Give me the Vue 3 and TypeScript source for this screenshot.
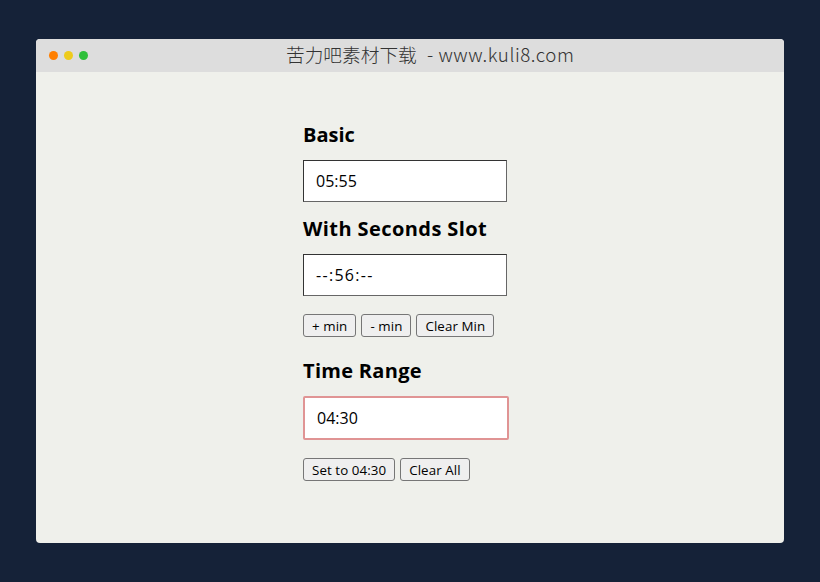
<template>
  <div class="page">
    <div class="window">
      <div class="titlebar">
        <div class="dots">
          <span class="dot orange"></span>
          <span class="dot yellow"></span>
          <span class="dot green"></span>
        </div>
        <div class="title"><span class="cn">苦力吧素材下载</span> <span class="site">- www.kuli8.com</span></div>
      </div>
      <div class="content">
        <div class="column">
          <h3 class="first">Basic</h3>
          <input class="time" type="text" :value="basic" readonly />
          <h3 class="second">With Seconds Slot</h3>
          <input class="time dashed" type="text" :value="seconds" readonly />
          <div class="buttons">
            <button v-for="b in minButtons" :key="b" type="button">{{ b }}</button>
          </div>
          <h3 class="third">Time Range</h3>
          <input class="time error" type="text" :value="range" readonly />
          <div class="buttons">
            <button v-for="b in rangeButtons" :key="b" type="button">{{ b }}</button>
          </div>
        </div>
      </div>
    </div>
  </div>
</template>

<script setup lang="ts">
const basic = '05:55'
const seconds = '--:56:--'
const range = '04:30'
const minButtons: string[] = ['+ min', '- min', 'Clear Min']
const rangeButtons: string[] = ['Set to 04:30', 'Clear All']
</script>

<style>
html,
body {
  margin: 0;
  background: #152238;
}
</style>

<style scoped>
.page {
  width: 820px;
  height: 582px;
  padding: 39px 36px;
  box-sizing: border-box;
  background: #152238;
  font-family: "Open Sans", "Noto Sans", sans-serif;
}

.window {
  height: 504px;
  border-radius: 4px;
  overflow: hidden;
  background: #eff0eb;
}

.titlebar {
  height: 33px;
  display: flex;
  align-items: center;
  position: relative;
  background: #dddddd;
}

.dots {
  display: flex;
  gap: 6px;
  margin-left: 13px;
}

.dot {
  width: 9px;
  height: 9px;
  border-radius: 50%;
}

.orange { background: #ff7f00; }
.yellow { background: #eecb1b; }
.green { background: #2fbf3a; }

.title {
  position: absolute;
  left: 250px;
  top: 2px;
  font-family: "Noto Sans CJK SC", "Noto Sans", sans-serif;
  font-size: 18.7px;
  font-weight: 300;
  line-height: 26px;
  color: #333;
  white-space: nowrap;
}

.site {
  margin-left: 6px;
  letter-spacing: 0.55px;
}

.content {
  padding: 48px 0 0 267px;
}

.column {
  width: 210px;
  display: flex;
  flex-direction: column;
  align-items: flex-start;
}

h3 {
  margin: 0 0 10px;
  font-size: 20px;
  line-height: 30px;
  font-weight: 700;
  letter-spacing: 0.3px;
  color: #000;
}

h3.first {
  letter-spacing: 0;
}

h3.second {
  margin-top: 12px;
  letter-spacing: 0.42px;
}

h3.third {
  margin-top: 19px;
}

.time {
  width: 204px;
  height: 42px;
  box-sizing: border-box;
  padding: 0 12px;
  border: 1px solid #333;
  border-bottom-color: #666;
  border-right-color: #666;
  border-radius: 0;
  outline: none;
  background: #fff;
  font-family: inherit;
  font-size: 16px;
  color: #000;
}

.time.dashed {
  letter-spacing: 1.3px;
}

.time.error {
  width: 206px;
  height: 44px;
  border: 2px solid #e09494;
  border-radius: 2px;
}

.buttons {
  display: flex;
  gap: 5px;
  margin-top: 18px;
}

button {
  height: 23px;
  padding: 0 8px;
  box-sizing: border-box;
  border: 1px solid #767676;
  border-radius: 3px;
  background: #efefef;
  font-family: inherit;
  font-size: 13.33px;
  letter-spacing: 0.08px;
  color: #000;
}
</style>
